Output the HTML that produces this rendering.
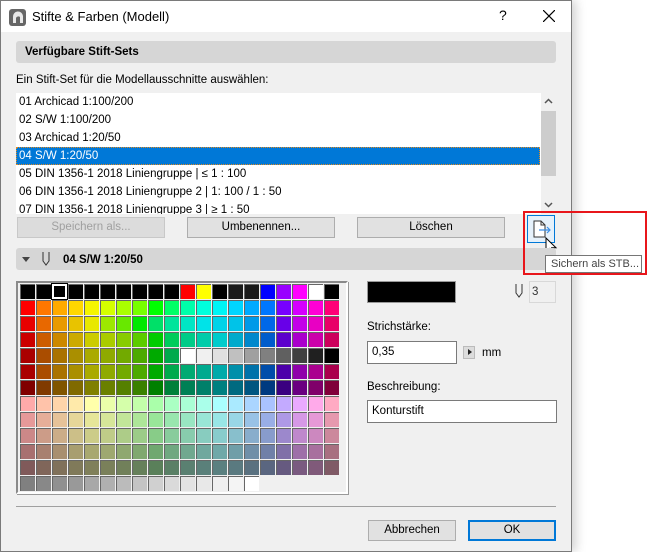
<!DOCTYPE html>
<html><head><meta charset="utf-8"><style>
*{box-sizing:border-box;margin:0;padding:0}
body{width:647px;height:552px;background:#fff;font-family:"Liberation Sans",sans-serif;font-size:11.5px;color:#000;position:relative;overflow:hidden}
.a{position:absolute}
#dlg{left:0;top:0;width:572px;height:552px;background:#f0f0f0;border:1px solid #7a7a7a;box-shadow:4px 0 10px rgba(0,0,0,.18)}
.title{left:0;top:0;width:570px;height:31px;background:#fff}
.bar{background:#d6d6d6;border-radius:3px}
.btn{background:#e1e1e1;border:1px solid #adadad;text-align:center;line-height:19px}
.inp{background:#fff;border:1px solid #7a7a7a;padding-left:4px;line-height:20px}
.li{left:3px;height:18px;line-height:18px;white-space:nowrap}
#pal div{position:absolute;width:15px;height:15px;border-top:1px solid #666;border-left:1px solid #666}
</style></head><body>
<div id="dlg" class="a">
<div class="a title"></div>
<svg class="a" style="left:8px;top:8px" width="17" height="17"><rect x="0" y="0" width="17" height="17" rx="3" fill="#666"/><path d="M4 14 V8 A5 5 0 0 1 14 7 L14 14 L11 14 L11 8 A2.5 2.5 0 0 0 7 9 V14Z" fill="#e8e8e8"/></svg>
<div class="a" style="left:31px;top:8px;font-size:13px">Stifte &amp; Farben (Modell)</div>
<div class="a" style="left:498px;top:6px;font-size:14px">?</div>
<svg class="a" style="left:542px;top:9px" width="12" height="12"><path d="M0 0L12 12M12 0L0 12" stroke="#000" stroke-width="1.2"/></svg>

<div class="a bar" style="left:15px;top:40px;width:540px;height:22px"></div>
<div class="a" style="left:24px;top:45px;font-weight:bold">Verfügbare Stift-Sets</div>
<div class="a" style="left:15px;top:73px">Ein Stift-Set für die Modellausschnitte auswählen:</div>

<div class="a" style="left:15px;top:92px;width:525px;height:121px;background:#fff;overflow:hidden">
<div class="a li" style="top:0">01 Archicad 1:100/200</div>
<div class="a li" style="top:18px">02 S/W 1:100/200</div>
<div class="a li" style="top:36px">03 Archicad 1:20/50</div>
<div class="a" style="left:0;top:54px;width:524px;height:18px;background:#0078d7;border:1px dotted #e08a20"></div>
<div class="a li" style="top:54px;color:#fff">04 S/W 1:20/50</div>
<div class="a li" style="top:72px">05 DIN 1356-1 2018 Liniengruppe | ≤ 1 : 100</div>
<div class="a li" style="top:90px">06 DIN 1356-1 2018 Liniengruppe 2 | 1: 100 / 1 : 50</div>
<div class="a li" style="top:108px">07 DIN 1356-1 2018 Liniengruppe 3 | ≥ 1 : 50</div>
</div>
<div class="a" style="left:540px;top:92px;width:15px;height:121px;background:#f0f0f0"></div>
<div class="a" style="left:540px;top:110px;width:15px;height:65px;background:#cdcdcd"></div>
<svg class="a" style="left:543px;top:97px" width="9" height="6"><path d="M1 5L4.5 1.5L8 5" fill="none" stroke="#555" stroke-width="1.5"/></svg>
<svg class="a" style="left:543px;top:201px" width="9" height="6"><path d="M1 1L4.5 4.5L8 1" fill="none" stroke="#555" stroke-width="1.5"/></svg>

<div class="a btn" style="left:16px;top:216px;width:148px;height:21px;color:#a0a0a0;border-color:#c8c8c8;background:#dcdcdc">Speichern als...</div>
<div class="a btn" style="left:186px;top:216px;width:148px;height:21px">Umbenennen...</div>
<div class="a btn" style="left:356px;top:216px;width:148px;height:21px">Löschen</div>
<div class="a" style="left:526px;top:214px;width:28px;height:28px;border:1px solid #0078d7;background:#e5f1fb"></div>
<svg class="a" style="left:530px;top:218px" width="22" height="22"><path d="M3 2H10L14 6V18H3Z" fill="#fff" stroke="#333"/><path d="M10 2V6H14" fill="none" stroke="#333"/><path d="M8 11H19M16 8L19 11L16 14" fill="none" stroke="#3a8ee6" stroke-width="1.2"/></svg>
<svg class="a" style="left:544px;top:236px" width="14" height="20"><path d="M1 1V15L4.5 11.5L7 17L9 16L6.7 10.8H11Z" fill="#fff" stroke="#000"/></svg>

<div class="a bar" style="left:15px;top:247px;width:540px;height:22px"></div>
<div class="a" style="left:21px;top:256px;width:0;height:0;border-left:4px solid transparent;border-right:4px solid transparent;border-top:5px solid #444"></div>
<svg class="a" style="left:40px;top:250px" width="10" height="16"><path d="M2 1V10L5 14L8 10V1" fill="none" stroke="#333"/></svg>
<div class="a" style="left:62px;top:253px;font-weight:bold">04 S/W 1:20/50</div>

<div class="a" style="left:15px;top:280px;width:332px;height:213px;border:2px solid #8a8a8a;border-right-color:#fff;border-bottom-color:#fff;background:#f0f0f0;box-shadow:1px 1px 0 #999"></div>
<div id="pal" class="a" style="left:19px;top:283px"></div>

<div class="a" style="left:366px;top:280px;width:89px;height:22px;background:#000;border:1px solid #999"></div>
<svg class="a" style="left:513px;top:282px" width="10" height="16"><path d="M2 1V10L5 14L8 10V1" fill="none" stroke="#333"/></svg>
<div class="a" style="left:528px;top:280px;width:27px;height:22px;border:1px solid #d8d8d8;background:#f0f0f0;padding-left:2px;line-height:20px;color:#333">3</div>

<div class="a" style="left:366px;top:320px">Strichstärke:</div>
<div class="a inp" style="left:366px;top:340px;width:90px;height:23px">0,35</div>
<div class="a" style="left:462px;top:345px;width:12px;height:13px;background:#dcdcdc;border:1px solid #bbb"></div>
<div class="a" style="left:467px;top:348px;width:0;height:0;border-top:3.5px solid transparent;border-bottom:3.5px solid transparent;border-left:4px solid #222"></div>
<div class="a" style="left:481px;top:346px">mm</div>

<div class="a" style="left:366px;top:380px">Beschreibung:</div>
<div class="a inp" style="left:366px;top:399px;width:190px;height:23px">Konturstift</div>

<div class="a" style="left:15px;top:505px;width:540px;height:1px;background:#a0a0a0"></div>
<div class="a btn" style="left:367px;top:519px;width:88px;height:21px">Abbrechen</div>
<div class="a btn" style="left:467px;top:519px;width:88px;height:21px;border:2px solid #0078d7;line-height:17px">OK</div>
</div>

<div class="a" style="left:523px;top:211px;width:124px;height:64px;border:2px solid #e8161b"></div>
<div class="a" style="left:545px;top:255px;width:97px;height:18px;background:#fff;border:1px solid #767676;line-height:16px;padding-left:5px;color:#444;font-size:11px;white-space:nowrap;overflow:hidden">Sichern als STB...</div>

<script>
var R=[
"000000 000000 000000 000000 000000 000000 000000 000000 000000 000000 ff0000 ffff00 000000 1a1a1a 1a1a1a 0000ff 9900ff ff00ff ffffff 000000",
"ff0000 ff7700 ffaa00 ffd700 f5f500 d5ff00 aaff00 77ff00 00ff00 00ff66 00ffaa 00ffdd 00f5f5 00d5ff 00aaff 0077ff 7700ff d500ff ff00d5 ff0077",
"e80000 e86800 e89a00 e8c300 e8e800 9de800 68e800 00e800 00e068 00e49b 00e6c4 00e3e8 00d3e8 00c3e8 009ae8 0068e8 6800e8 c300e8 e800c3 e80068",
"cc0000 cc5c00 cc8800 ccaa00 cccc00 aacc00 88cc00 5ccc00 00cc00 00cc5c 00cc88 00ccaa 00cccc 00aacc 0088cc 005ccc 5c00cc aa00cc cc00aa cc005c",
"aa0000 aa4d00 aa7200 aa8f00 aaaa00 8faa00 72aa00 4daa00 00aa00 00aa4d ffffff f0f0f0 e0e0e0 c0c0c0 a0a0a0 808080 606060 404040 202020 000000",
"aa0000 aa4d00 aa7200 aa8f00 aaaa00 8faa00 72aa00 4daa00 00aa00 00aa4d 00aa72 00aa8f 00aaaa 008faa 0072aa 004daa 4d00aa 8f00aa aa008f aa004d",
"800000 803a00 805500 806a00 808000 6a8000 558000 3a8000 008000 00803a 008055 00806a 008080 006a80 005580 003a80 3a0080 6a0080 80006a 80003a",
"ffaaaa ffc3aa ffd5aa ffeaaa ffffaa eaffaa d5ffaa c3ffaa aaffaa aaffc3 aaffd5 aaffea aaffff aaeaff aad5ff aac3ff c3aaff eaaaff ffaaea ffaac3",
"e69999 e6ae99 e6c299 e6d699 e6e699 d6e699 c2e699 aee699 99e699 99e6ae 99e6c2 99e6d6 99e6e6 99d6e6 99c2e6 99aee6 ae99e6 d699e6 e699d6 e699ae",
"cc8888 cc9c88 ccad88 ccbf88 cccc88 bfcc88 adcc88 9ccc88 88cc88 88cc9c 88ccad 88ccbf 88cccc 88bfcc 88adcc 889ccc 9c88cc bf88cc cc88bf cc889c",
"a87070 a88070 a88f70 a89e70 a8a870 9ea870 8fa870 80a870 70a870 70a880 70a88f 70a89e 70a8a8 709ea8 708fa8 7080a8 8070a8 9e70a8 a8709e a87080",
"805a5a 80665a 80715a 807a5a 80805a 7a805a 71805a 66805a 5a805a 5a8066 5a8071 5a807a 5a8080 5a7a80 5a7180 5a6680 665a80 7a5a80 805a7a 805a66",
"808080 888888 909090 999999 a8a8a8 b0b0b0 bbbbbb c4c4c4 d0d0d0 dadada e3e3e3 e8e8e8 efefef f4f4f4 ffffff"];
var h="";R.forEach(function(r,y){r.split(" ").forEach(function(c,x){var ex=(y==0&&x==2)?';border:2px solid #fff;outline:1px solid #000':'';h+='<div style="left:'+(x*16)+'px;top:'+(y*16)+'px;background:#'+c+ex+'"></div>';});});
document.getElementById("pal").innerHTML=h;
</script>
</body></html>
